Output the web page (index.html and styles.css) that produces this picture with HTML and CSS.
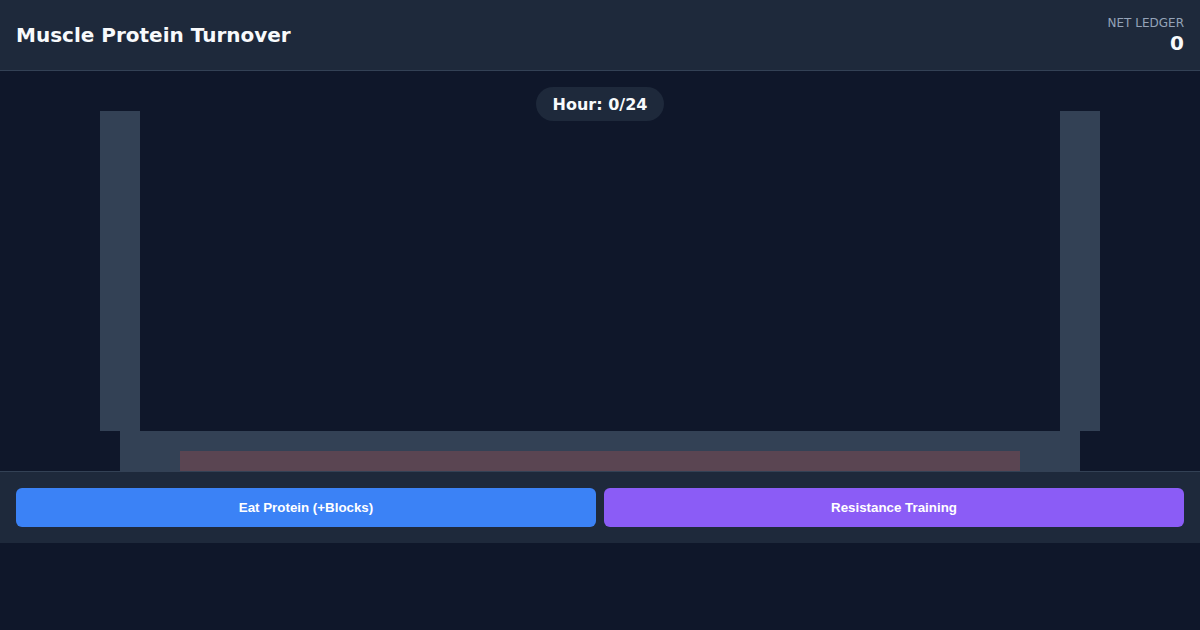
FILE: index.html
```html
<!DOCTYPE html>
<html lang="en">
<head>
<meta charset="utf-8">
<title>Muscle Protein Turnover</title>
<link rel="stylesheet" href="styles.css">
</head>
<body>
  <header class="topbar">
    <h1 class="title">Muscle Protein Turnover</h1>
    <div class="ledger">
      <span class="ledger-label">NET LEDGER</span>
      <span class="ledger-value">0</span>
    </div>
  </header>

  <main class="scene">
    <div class="clock">Hour: 0/24</div>
    <!-- tank: two walls, a floor and the muscle layer resting on it -->
    <div class="wall wall-left"></div>
    <div class="wall wall-right"></div>
    <div class="floor"></div>
    <div class="muscle"></div>
  </main>

  <footer class="controls">
    <button class="btn btn-eat">Eat Protein (+Blocks)</button>
    <button class="btn btn-train">Resistance Training</button>
  </footer>
</body>
</html>
```

FILE: styles.css
```css
* {
  box-sizing: border-box;
}

html, body {
  margin: 0;
  padding: 0;
}

body {
  background: #0f172a;
  color: #f8fafc;
  font-family: "DejaVu Sans", sans-serif;
  width: 1200px;
  height: 630px;
  overflow: hidden;
}

.topbar {
  height: 71px;
  display: flex;
  align-items: center;
  justify-content: space-between;
  padding: 0 16px;
  background: #1e293b;
  border-bottom: 1px solid #334155;
}

.title {
  margin: 0;
  font-size: 20px;
  font-weight: bold;
  color: #f8fafc;
}

.ledger {
  display: flex;
  flex-direction: column;
  align-items: flex-end;
}

.ledger-label {
  font-size: 12px;
  line-height: 14px;
  color: #94a3b8;
}

.ledger-value {
  font-size: 20px;
  line-height: 24px;
  font-weight: bold;
  color: #f8fafc;
  margin-top: 1px;
}

.scene {
  position: relative;
  height: 400px;
  overflow: hidden;
  display: flex;
  justify-content: center;
  padding-top: 16px;
}

.clock {
  height: 34px;
  padding: 0 17px;
  display: flex;
  align-items: center;
  background: #1e293b;
  border-radius: 17px;
  font-size: 16px;
  font-weight: bold;
  color: #f8fafc;
}

.wall,
.floor {
  position: absolute;
  background: #334155;
}

.wall {
  top: 40px;
  width: 40px;
  height: 320px;
}

.wall-left {
  left: 100px;
}

.wall-right {
  left: 1060px;
}

.floor {
  left: 120px;
  top: 360px;
  width: 960px;
  height: 60px;
}

.muscle {
  position: absolute;
  left: 180px;
  top: 380px;
  width: 840px;
  height: 40px;
  background: #5a4552;
}

.controls {
  display: flex;
  gap: 8px;
  padding: 16px;
  background: #1e293b;
  border-top: 1px solid #334155;
}

.btn {
  flex: 1;
  height: 39px;
  border: none;
  border-radius: 6px;
  color: #ffffff;
  font-family: "Liberation Sans", Arial, sans-serif;
  font-size: 13.333px;
  font-weight: bold;
  cursor: pointer;
}

.btn-eat {
  background: #3b82f6;
}

.btn-train {
  background: #8b5cf6;
}
```
